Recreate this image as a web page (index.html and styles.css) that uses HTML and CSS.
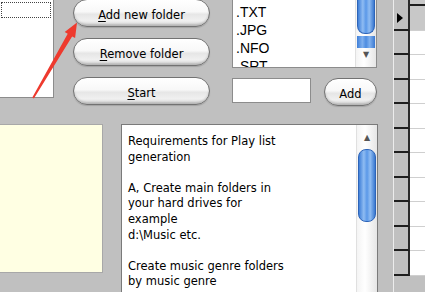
FILE: index.html
```html
<!DOCTYPE html>
<html lang="en">
<head>
<meta charset="UTF-8" />
<title>Play list generator</title>
<link rel="stylesheet" href="styles.css">
</head>
<body>

<div class="app">
  <div class="main">

    <!-- top: folders, actions, extensions -->
    <div class="top">
      <div class="folders">
        <div class="focus"></div>
      </div>

      <div class="actions">
        <button class="pill wide"><u>A</u>dd new folder</button>
        <button class="pill wide"><u>R</u>emove folder</button>
        <button class="pill wide"><u>S</u>tart</button>
      </div>

      <div class="exts">
        <div class="extlist">
          <ul class="items">
            <li>.TXT</li>
            <li>.JPG</li>
            <li>.NFO</li>
            <li>.SRT</li>
          </ul>
          <div class="vscroll small">
            <div class="thumb top-thumb"></div>
            <div class="band"></div>
            <div class="arrow">&#9660;</div>
          </div>
        </div>
        <div class="addrow">
          <div class="field"></div>
          <button class="pill add">Add</button>
        </div>
      </div>
    </div>

    <!-- bottom: note and requirements -->
    <div class="bottom">
      <div class="note"></div>
      <div class="reqs">
        <div class="reqs-text">
          Requirements for Play list<br>
          generation<br>
          <br>
          A, Create main folders in<br>
          your hard drives for<br>
          example<br>
          d:\Music etc.<br>
          <br>
          Create music genre folders<br>
          by music genre
        </div>
        <div class="vscroll big">
          <div class="arrow up">&#9650;</div>
          <div class="thumb long-thumb"></div>
        </div>
      </div>
    </div>

  </div>

  <!-- right: data grid -->
  <div class="grid" id="grid"></div>
</div>

<svg class="pointer" width="425" height="292" viewBox="0 0 425 292">
  <polygon fill="#ee3a2e" points="32.3,97.6 67.7,33.8 64.7,32.1 77,22.5 75.1,38.1 72.1,36.4 33.9,98.4" />
</svg>

<script>
  // build grid rows
  const grid = document.getElementById('grid');
  for (let i = 0; i < 12; i++) {
    const row = document.createElement('div');
    row.className = i === 0 ? 'grow head' : (i === 1 ? 'grow current' : 'grow');
    row.innerHTML = '<div class="rh">' + (i === 1 ? '<span class="mark"></span>' : '') + '</div><div class="cell"></div>';
    grid.appendChild(row);
  }
</script>

</body>
</html>
```

FILE: styles.css
```css
* {
  margin: 0; padding: 0; box-sizing: border-box;
}
body {
  background: #c0c0c0;
  font-family: 'DejaVu Sans', Verdana, sans-serif;
  font-size: 11.5px;
  color: #000;
  width: 425px;
  height: 292px;
  overflow: hidden;
  position: relative;
}
.app {
  display: flex;
  height: 292px;
}
.main {
  width: 393px;
  display: flex;
  flex-direction: column;
}

/* top area */
.top {
  display: flex;
  align-items: flex-start;
  margin-top: -3px;
  height: 109px;
}
.folders {
  width: 55px;
  height: 101px;
  margin-left: -1px;
  background: #fff;
  border: 1px solid #8c8c8c;
  padding: 4px 2px 0 1px;
}
.focus {
  height: 16px;
  border: 1px dotted #444;
}
.actions {
  margin-left: 19px;
  margin-top: 2px;
  width: 137px;
  display: flex;
  flex-direction: column;
  gap: 11px;
}
.pill {
  height: 28px;
  border: 1px solid #727272;
  border-radius: 14px;
  background: linear-gradient(#ffffff 0%, #f8f8f8 45%, #e6e6e6 55%, #f0f0f0 80%, #d2d2d2 100%);
  box-shadow: inset 0 -2px 2px rgba(0,0,0,0.14), 0 1px 1px rgba(0,0,0,0.15);
  font-family: 'DejaVu Sans', Verdana, sans-serif;
  font-size: 11.5px;
  color: #000;
  padding-top: 3px;
}
.pill u {
  text-decoration-thickness: 1px;
  text-underline-offset: 2px;
}
.exts {
  margin-left: 22px;
  width: 145px;
}
.extlist {
  height: 71px;
  background: #fff;
  border: 1px solid #8c8c8c;
  display: flex;
  overflow: hidden;
}
.items {
  list-style: none;
  flex: 1;
  font-family: 'Liberation Sans', Arial, sans-serif;
  font-size: 14px;
  line-height: 18px;
  padding: 5px 0 0 3px;
}
.vscroll {
  width: 21px;
  background: linear-gradient(90deg, #f4f4f4, #ffffff 40%, #e6e6e6);
  border-left: 1px solid #e0e0e0;
  position: relative;
}
.thumb {
  margin: 0 auto;
  width: 18px;
  background: linear-gradient(90deg, #3f7fd8, #8fbcf2 30%, #5a98e8 50%, #8fbcf2 70%, #3a78d0);
  border: 1px solid #2d64b8;
}
.top-thumb {
  height: 36px;
  border-radius: 0 0 8px 8px;
  border-top: none;
}
.band {
  margin: 2px auto 0;
  width: 18px;
  height: 12px;
  background: linear-gradient(90deg, #3f7fd8, #7fb0ee 30%, #4d8ce0 50%, #7fb0ee 70%, #3a78d0);
}
.arrow {
  text-align: center;
  font-size: 8px;
  color: #555;
  line-height: 12px;
}
.small .arrow {
  margin-top: 1px;
}
.addrow {
  display: flex;
  align-items: flex-start;
  margin-top: 10px;
}
.field {
  width: 79px;
  height: 25px;
  background: #fff;
  border: 1px solid #8c8c8c;
}
.add {
  margin-left: 13px;
  width: 53px;
}

/* bottom area */
.bottom {
  display: flex;
  align-items: flex-start;
  margin-top: 18px;
  flex: 1;
}
.note {
  width: 104px;
  height: 149px;
  margin-left: -1px;
  background: #ffffe3;
  border: 1px solid #a8a8a8;
}
.reqs {
  margin-left: 18px;
  width: 257px;
  height: 180px;
  background: #fff;
  border: 1px solid #7a7a7a;
  display: flex;
}
.reqs-text {
  flex: 1;
  white-space: nowrap;
  line-height: 15.6px;
  padding: 9px 0 0 6px;
}
.big {
  width: 21px;
}
.arrow.up {
  height: 24px;
  line-height: 26px;
}
.long-thumb {
  height: 73px;
  border-radius: 8px;
}

/* data grid */
.grid {
  width: 32px;
  margin-left: 3px;
  border-left: 1px solid #ececec;
  display: flex;
  flex-direction: column;
}
.grow {
  display: flex;
  height: 24.5px;
}
.grow.head {
  height: 6px;
}
.rh {
  width: 16px;
  background: #c0c0c0;
  border-right: 2px solid #2a2a2a;
  border-bottom: 2px solid #1e1e1e;
  padding: 7px 0 0 3px;
}
.mark {
  display: block;
  width: 0;
  height: 0;
  border-left: 6px solid #000;
  border-top: 5px solid transparent;
  border-bottom: 5px solid transparent;
}
.cell {
  flex: 1;
  background: #fff;
  border-bottom: 1px solid #cfcfcf;
}
.head .cell,
.current .cell {
  background: #c8c8c8;
}
.head .cell {
  border-bottom: 2px solid #1e1e1e;
}

/* annotation arrow over the form */
.pointer {
  position: absolute;
  left: 0;
  top: 0;
  pointer-events: none;
}
```
